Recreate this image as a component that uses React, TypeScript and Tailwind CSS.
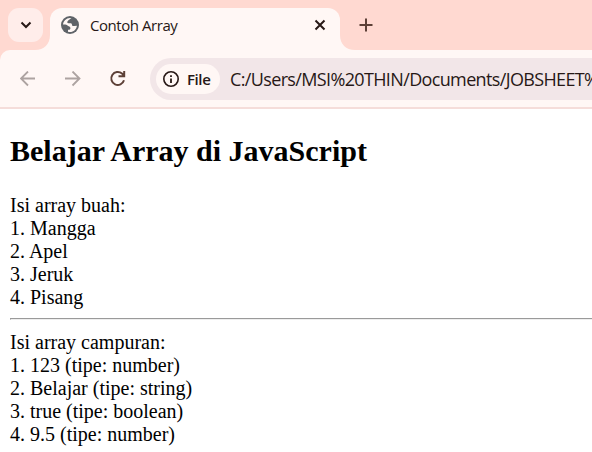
function Globe() {
  return (
    <svg width="18" height="18" viewBox="0 0 18 18" className="shrink-0">
      <circle cx="9" cy="9" r="9" fill="#5f6368" />
      <path
        d="M10.5 2.1C9.300 3 8.500 3.500 7.200 4.500C5.800 5.600 6 7.200 7.500 7.300H9.800C10.700 7.400 10.900 8 11 9C11.200 10 12.200 10.200 13.300 10.100L15.900 9.700C15.500 13.300 12.700 16 9 16C8.300 16 7.600 15.900 7 15.700V13.800C9.200 13.800 9.700 12.900 9.300 11.500C8.900 10.400 7.500 10.500 6.500 9.500C5.600 8.600 4.200 8.400 2 8.600C2.300 5 5.300 2 9 2Z"
        fill="#fff7f5"
      />
    </svg>
  );
}

export default function App() {
  return (
    <div className="h-[452px] w-[592px] overflow-hidden bg-white">
      <header className="font-['Open_Sans','Noto_Sans',sans-serif] text-[#271816]">
        <div className="flex h-[50px] bg-[#ffd9d1] pl-2">
          <div className="mt-2 flex h-[34px] w-[35px] shrink-0 items-center justify-center rounded-[11px] bg-[#ffedea]">
            <svg width="12" height="8" viewBox="0 0 12 8" fill="none" stroke="currentColor" strokeWidth="2"><path d="M1.500 1.500L6 6L10.500 1.500" /></svg>
          </div>
          <div className="relative mt-2 ml-[7px] flex h-[42px] w-[290px] shrink-0 rounded-t-[12px] bg-[#fff7f5] pt-2 pr-[14px] pl-[11px]">
            <svg className="absolute bottom-0 -left-[15px]" width="15" height="15"><path d="M0 15C9 15 15 9 15 0V15Z" fill="#fff7f5" /></svg>
            <svg className="absolute -right-[15px] bottom-0" width="15" height="15"><path d="M15 15C6 15 0 9 0 0V15Z" fill="#fff7f5" /></svg>
            <Globe />
            <span className="-mt-px ml-[11px] text-[15px] leading-[20px] tracking-[-0.45px] whitespace-nowrap">Contoh Array</span>
            <svg className="mt-[3px] ml-auto" width="12" height="12" fill="none" stroke="currentColor" strokeWidth="2"><path d="M1.500 1.500L10.500 10.500M10.500 1.500L1.500 10.500" /></svg>
          </div>
          <svg className="mt-[18px] ml-[19px]" width="14" height="14" fill="none" stroke="#5d4037" strokeWidth="2"><path d="M7 .5V13.500M.5 7H13.500" /></svg>
        </div>
        <div className="bg-[#ffd9d1]">
          <div className="flex h-[59px] items-start rounded-tl-[10px] border-b-2 border-[#f5ddda] bg-[#fff7f5] pt-2 pl-5">
            <svg className="mt-[13px] shrink-0" width="16" height="16" fill="none" stroke="#ada3a1" strokeWidth="1.800"><path d="M15 7.500H1.500M8 .5L1 7.500L8 14.500" /></svg>
            <svg className="mt-[13px] ml-[29px] shrink-0" width="16" height="16" fill="none" stroke="#ada3a1" strokeWidth="1.800"><path d="M0 7.500H14M7.500 .5L14.500 7.500L7.500 14.500" /></svg>
            <svg className="mt-[12px] ml-[28px] shrink-0" width="17" height="17" fill="none" stroke="#5d4037" strokeWidth="2"><path d="M15 10.300A6.500 6.500 0 1 1 13 3.500L15 5.500M15.200 1V6.200H9.500" /></svg>
            <div className="ml-[24px] flex h-[42px] min-w-0 flex-1 items-start rounded-l-[21px] bg-[#f2e6e8] pt-[6px] pl-[6px]">
              <div className="flex h-[30px] w-16 shrink-0 items-center rounded-full bg-[#fff7f5] pl-[7px]">
                <svg width="16" height="16" className="shrink-0"><circle cx="8" cy="8" r="7.200" fill="none" stroke="currentColor" strokeWidth="1.600" /><path d="M8 7.500V12M8 4.200V6" stroke="currentColor" strokeWidth="1.800" /></svg>
                <span className="-mt-px ml-[8px] text-[15px] leading-[20px] font-semibold tracking-[-0.4px]">File</span>
              </div>
              <span className="ml-[10px] pt-[3px] text-[18px] leading-[24px] tracking-[-0.64px] whitespace-nowrap">C:/Users/MSI%20THIN/Documents/JOBSHEET%</span>
            </div>
          </div>
        </div>
      </header>
      <main className="pl-[10px] font-['Liberation_Serif',serif] text-black">
        <h2 className="pt-[25px] text-[30px] leading-[34px] font-bold whitespace-nowrap">Belajar Array di JavaScript</h2>
        <div className="pt-[26px] text-[20px] leading-[23px] whitespace-nowrap">
          <p>Isi array buah:</p>
          <p>1. Mangga</p>
          <p>2. Apel</p>
          <p>3. Jeruk</p>
          <p>4. Pisang</p>
        </div>
        <hr className="mt-[9px] h-[2px] border-t border-b border-l border-[#9a9a9a] border-b-[#eeeeee]" />
        <div className="pt-[11px] text-[20px] leading-[23px] whitespace-nowrap">
          <p>Isi array campuran:</p>
          <p>1. 123 (tipe: number)</p>
          <p>2. Belajar (tipe: string)</p>
          <p>3. true (tipe: boolean)</p>
          <p>4. 9.5 (tipe: number)</p>
        </div>
      </main>
    </div>
  );
}
